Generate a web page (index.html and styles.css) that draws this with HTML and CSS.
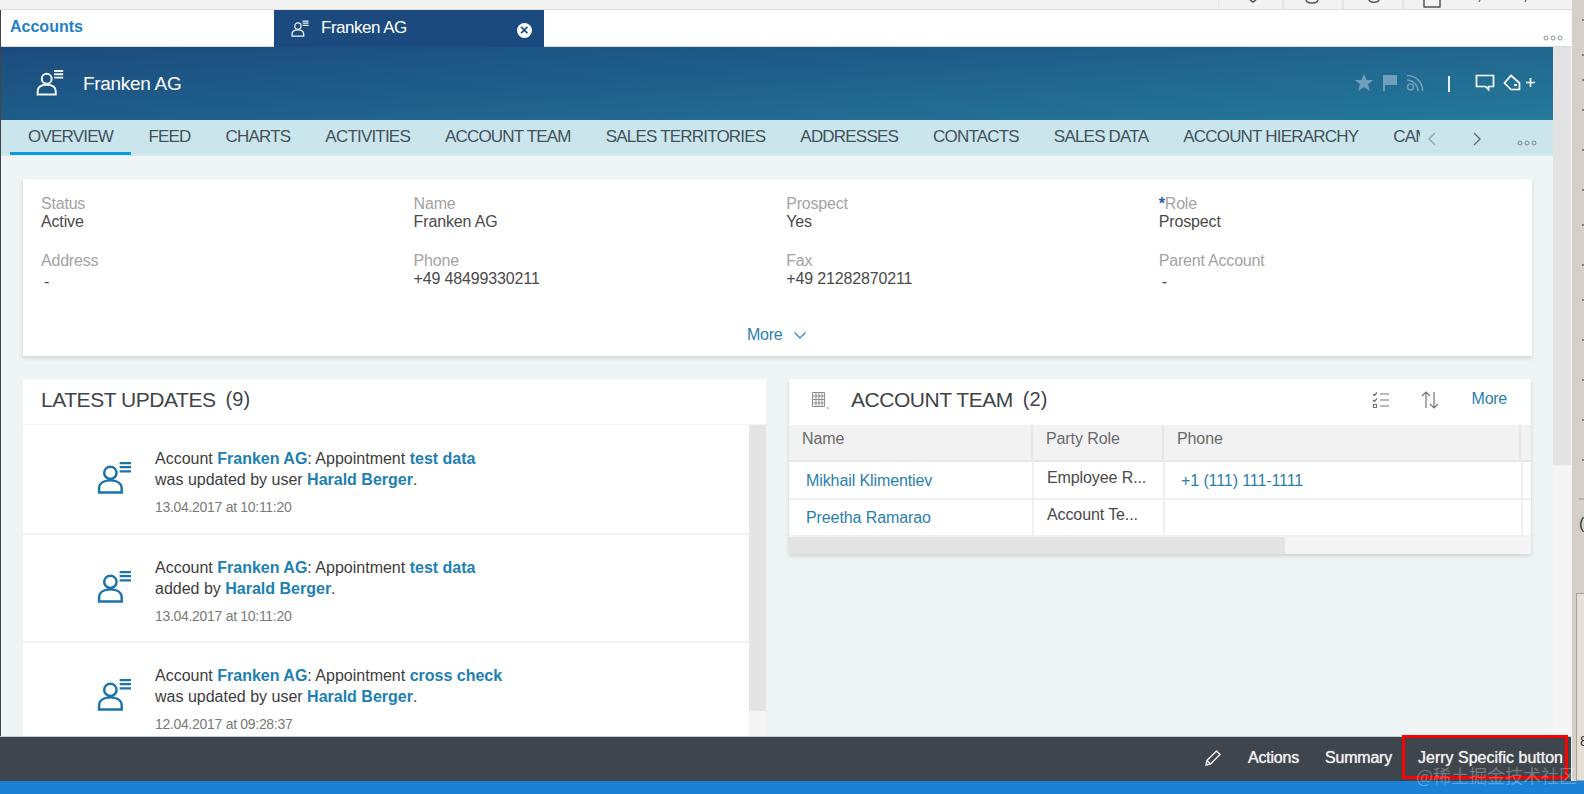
FILE: index.html
```html
<!DOCTYPE html>
<html lang="en">
<head>
<meta charset="utf-8">
<title>Franken AG</title>
<link rel="stylesheet" href="styles.css">
</head>
<body>
<svg class="defs" width="0" height="0">
  <symbol id="person" viewBox="0 0 34 32">
    <circle cx="13" cy="11.5" r="6" fill="none" stroke="currentColor" stroke-width="2.4"/>
    <path d="M2 30.5v-3.5c0-5 4-8.2 11-8.2s11 3.200 11 8.200v3.500z" fill="none" stroke="currentColor" stroke-width="2.4"/>
    <path d="M22 2h11M22 6h11M22 10h11" stroke="currentColor" stroke-width="2.200"/>
  </symbol>
  <symbol id="dots" viewBox="0 0 20 6">
    <circle cx="3" cy="3" r="2" fill="none" stroke="currentColor"/>
    <circle cx="10" cy="3" r="2" fill="none" stroke="currentColor"/>
    <circle cx="17" cy="3" r="2" fill="none" stroke="currentColor"/>
  </symbol>
</svg>
<div class="app">
  <div class="window">
    <div class="topstrip">
      <svg width="376" height="10" viewBox="0 0 376 10" fill="none" stroke="#777" stroke-width="1.500">
        <path d="M0 0v10M65 0v10M125 0v10M185 0v10" stroke="#d8d8d8" stroke-width="1"/>
        <path d="M32 0l3 2 3-2M88 0c1 4 11 4 12 0M151 0c1 3 9 3 10 0M206 0v7h16V0" stroke="#555"/>
        <path d="M262 0l-1 2M308 0l-1 2"/>
      </svg>
    </div>
    <div class="tabbar">
      <div class="tab-home">Accounts</div>
      <div class="tab-active">
        <svg class="tab-icon"><use href="#person"/></svg>
        <span class="tab-title">Franken AG</span>
        <span class="tab-close">×</span>
      </div>
      <svg class="tab-dots"><use href="#dots"/></svg>
    </div>
    <div class="body">
      <div class="main">
        <header class="objhead">
          <svg class="obj-icon"><use href="#person"/></svg>
          <h1 class="obj-title">Franken AG</h1>
          <div class="obj-actions">
            <svg class="act dim" width="20" height="20" viewBox="0 0 20 20"><path d="M10 1l2.600 6h6.400l-5 4.200 1.900 6.800L10 14.200 4.100 18 6 11.200 1 7h6.400z" fill="currentColor"/></svg>
            <svg class="act dim" width="16" height="18" viewBox="0 0 16 18"><path d="M1 1h14v10H3v6H1z" fill="currentColor"/></svg>
            <svg class="act dim" width="18" height="18" viewBox="0 0 18 18" fill="none" stroke="currentColor" stroke-width="1.500"><circle cx="4.500" cy="13" r="3"/><path d="M1 6c6 0 11 5 11 11M1 1.500c9 0 15.500 6.500 15.500 15.500"/></svg>
            <span class="act-sep"></span>
            <svg class="act chat" width="20" height="18" viewBox="0 0 20 18" fill="none" stroke="currentColor" stroke-width="1.700"><path d="M1.500 1.500h17v11h-5v3l-3-3h-9z"/></svg>
            <svg class="act tag" width="18" height="18" viewBox="0 0 18 18" fill="none" stroke="currentColor" stroke-width="1.700"><path d="M8 1.500l8.500 7.500v6.500H8L1.500 9z"/><path d="M11 11h3"/></svg>
            <svg class="act" width="9" height="9" viewBox="0 0 10 10" stroke="currentColor" stroke-width="1.800"><path d="M5 0v10M0 5h10"/></svg>
          </div>
        </header>
        <nav class="navbar">
          <div class="navlist">
            <a class="navitem is-active">OVERVIEW</a>
            <a class="navitem">FEED</a>
            <a class="navitem">CHARTS</a>
            <a class="navitem">ACTIVITIES</a>
            <a class="navitem">ACCOUNT TEAM</a>
            <a class="navitem">SALES TERRITORIES</a>
            <a class="navitem">ADDRESSES</a>
            <a class="navitem">CONTACTS</a>
            <a class="navitem">SALES DATA</a>
            <a class="navitem">ACCOUNT HIERARCHY</a>
            <a class="navitem">CAMPAIGNS</a>
          </div>
          <div class="navctl">
            <svg width="8" height="14" viewBox="0 0 8 14" fill="none" stroke="#8fa3ab" stroke-width="1.300"><path d="M7 1L1 7l6 6"/></svg>
            <svg width="8" height="14" viewBox="0 0 8 14" fill="none" stroke="#5a6b72" stroke-width="1.300"><path d="M1 1l6 6-6 6"/></svg>
            <svg class="nav-dots"><use href="#dots"/></svg>
          </div>
        </nav>
        <div class="content">
          <section class="card overview">
            <div class="fields">
              <div class="field"><div class="label">Status</div><div class="value">Active</div></div>
              <div class="field"><div class="label">Name</div><div class="value">Franken AG</div></div>
              <div class="field"><div class="label">Prospect</div><div class="value">Yes</div></div>
              <div class="field"><div class="label"><b class="req">*</b>Role</div><div class="value">Prospect</div></div>
              <div class="field"><div class="label">Address</div><div class="value dash">-</div></div>
              <div class="field"><div class="label">Phone</div><div class="value">+49 48499330211</div></div>
              <div class="field"><div class="label">Fax</div><div class="value">+49 21282870211</div></div>
              <div class="field"><div class="label">Parent Account</div><div class="value dash">-</div></div>
            </div>
            <div class="more-row">
              <a class="link">More</a>
              <svg width="12" height="7" viewBox="0 0 12 7" fill="none" stroke="#2a7fae" stroke-width="1.100"><path d="M.5.500L6 6l5.500-5.500"/></svg>
            </div>
          </section>
          <div class="columns">
            <section class="updates">
              <div class="panel-head"><h2 class="panel-title">LATEST UPDATES</h2><span class="panel-count">(9)</span></div>
              <div class="feed">
                <div class="feedlist">
                  <article class="feeditem first">
                    <svg class="feedicon"><use href="#person"/></svg>
                    <div>
                      <p class="line">Account <a class="flink">Franken AG</a>: Appointment <a class="flink">test data</a></p>
                      <p class="line">was updated by user <a class="flink">Harald Berger</a>.</p>
                      <p class="date">13.04.2017 at 10:11:20</p>
                    </div>
                  </article>
                  <article class="feeditem">
                    <svg class="feedicon"><use href="#person"/></svg>
                    <div>
                      <p class="line">Account <a class="flink">Franken AG</a>: Appointment <a class="flink">test data</a></p>
                      <p class="line">added by <a class="flink">Harald Berger</a>.</p>
                      <p class="date">13.04.2017 at 10:11:20</p>
                    </div>
                  </article>
                  <article class="feeditem">
                    <svg class="feedicon"><use href="#person"/></svg>
                    <div>
                      <p class="line">Account <a class="flink">Franken AG</a>: Appointment <a class="flink">cross check</a></p>
                      <p class="line">was updated by user <a class="flink">Harald Berger</a>.</p>
                      <p class="date">12.04.2017 at 09:28:37</p>
                    </div>
                  </article>
                </div>
                <div class="feedscroll"><div class="feedthumb"></div></div>
              </div>
            </section>
            <section class="card team">
              <div class="panel-head team-head">
                <svg class="grid-icon" width="20" height="18" viewBox="0 0 20 18" fill="none" stroke="#8a8f92"><path d="M3.500 1.500h12v14h-12zM3.500 5h12M3.500 8.500h12M3.500 12h12M7 1.500v14M10 1.500v14M13 1.500v14"/><path d="M18 17h2"/></svg>
                <h2 class="panel-title">ACCOUNT TEAM</h2><span class="panel-count">(2)</span>
                <div class="team-tools">
                  <svg width="18" height="18" viewBox="0 0 18 18" fill="none" stroke="#6f7477" stroke-width="1.200"><path d="M1 3l1.500 1.500L5 1.500M1 9l1.500 1.500L5 7.500M8 3h9M8 9h9M8 15h9M1.500 13.500h3v3h-3z"/></svg>
                  <svg width="20" height="20" viewBox="0 0 20 20" fill="none" stroke="#6f7477" stroke-width="1.200"><path d="M6 18V2M2 6l4-4 4 4M14 2v16M10 14l4 4 4-4"/></svg>
                  <a class="link team-more">More</a>
                </div>
              </div>
              <div class="thead">
                <div class="th">Name</div><div class="th">Party Role</div><div class="th">Phone</div><div class="th"></div>
              </div>
              <div class="tr">
                <div class="td"><a class="link">Mikhail Klimentiev</a></div>
                <div class="td role">Employee R...</div>
                <div class="td"><a class="link">+1 (111) 111-1111</a></div>
                <div class="td"></div>
              </div>
              <div class="tr">
                <div class="td"><a class="link">Preetha Ramarao</a></div>
                <div class="td role">Account Te...</div>
                <div class="td"></div>
                <div class="td"></div>
              </div>
              <div class="hscroll"><div class="hthumb"></div></div>
            </section>
          </div>
        </div>
      </div>
      <div class="pagescroll"><div class="pagethumb"></div></div>
    </div>
    <footer class="footer">
      <svg class="edit" width="18" height="18" viewBox="0 0 18 18" fill="none" stroke="#e8e8e8" stroke-width="1.500"><path d="M2 16l1-4.500L12.500 2l3.500 3.500L6.500 15z"/><path d="M3 11.500L6.500 15"/></svg>
      <button class="fbtn">Actions</button>
      <button class="fbtn">Summary</button>
      <button class="fbtn marked">Jerry Specific button</button>
    </footer>
  </div>
  <aside class="rail">
    <svg class="rail-ticks" width="13" height="500" viewBox="0 0 13 500" stroke="#333">
      <path d="M11 20h2M11 55h2M11 80h2M11 110h2M11 150h2M11 190h2M11 225h2M11 265h2M11 300h2M11 340h2M11 380h2M11 420h2M11 460h2"/>
      <path d="M8 499h5" stroke="#999"/>
    </svg>
    <div class="rail-bracket">(</div>
    <div class="rail-box"><span class="rail-num">8</span></div>
  </aside>
</div>
<div class="statusbar"><span class="watermark">@稀土掘金技术社区</span></div>
</body>
</html>
```
FILE: styles.css
```css
* { box-sizing: border-box; }
html, body { margin: 0; padding: 0; }
body {
  width: 1584px;
  height: 794px;
  overflow: hidden;
  font-family: "Liberation Sans", Arial, sans-serif;
  font-size: 16px;
  color: #333;
  background: #fff;
  position: relative;
}
.defs { position: absolute; }
p, h1, h2 { margin: 0; font-weight: 400; }
.app { display: flex; height: 781px; }
.window { width: 1571px; display: flex; flex-direction: column; border-left: 1px solid #444; }

.topstrip { height: 10px; background: #f2f2f2; border-bottom: 1px solid #dcdcdc; display: flex; justify-content: flex-end; overflow: hidden; margin-left: -1px; }
.topstrip svg { display: block; flex: none; margin-right: -23px; }

.tabbar { height: 37px; background: #fff; border-bottom: 1px solid #d9d9d9; display: flex; align-items: stretch; position: relative; }
.tab-home { width: 273px; padding: 6px 0 0 9px; color: #1f80c6; font-weight: 700; font-size: 16px; line-height: 22px; }
.tab-active { width: 270px; background: #1b4b7e; color: #fff; display: flex; align-items: flex-start; padding: 8px 0 0 17px; margin-bottom: -1px; }
.tab-icon { width: 18px; height: 17px; margin-top: 2px; color: #eef3f7; }
.tab-title { margin-left: 12px; font-size: 17px; letter-spacing: -.5px; line-height: 20px; }
.tab-close { width: 15px; height: 15px; border-radius: 50%; background: #fff; color: #1b4b7e; font-weight: 700; font-size: 15px; line-height: 14px; text-align: center; margin: 5px 0 0 110px; }
.tab-dots { width: 20px; height: 6px; color: #8a949a; margin: 25px 8px 0 auto; }

.body { flex: 1; display: flex; min-height: 0; }
.main { width: 1552px; display: flex; flex-direction: column; background: #eff5f5; min-height: 0; overflow: hidden; }
.pagescroll { width: 18px; background: #f5f5f5; }
.pagethumb { height: 418px; background: #e3e3e3; }

.objhead { height: 73px; flex: none; background: linear-gradient(176deg, #1b4b7e 0%, #1f5f8a 45%, #257a9b 100%); color: #fff; display: flex; align-items: center; padding-left: 35px; }
.obj-icon { width: 28px; height: 27px; color: #f2f6f8; margin-top: -2px; }
.obj-title { font-size: 19px; margin-left: 19px; letter-spacing: -.3px; line-height: 22px; }
.obj-actions { margin-left: auto; display: flex; align-items: center; padding-right: 18px; margin-top: -2px; }
.act { display: block; color: #fff; margin-left: 8px; }
.act:last-child { margin-left: 5px; }
.act.tag { margin-left: 8px; }
.act.chat { margin-left: 0; }
.act-sep { width: 2px; height: 16px; background: #e8eef2; margin: 2px 25px 0 24px; }
.act.dim { color: #6f9fba; }

.navbar { height: 36px; flex: none; background: #cbe5ed; display: flex; border-bottom: 1px solid #dfeaec; }
.navlist { width: 1419px; display: flex; overflow: hidden; padding-left: 9px; }
.navitem { flex: none; padding: 7px 17.5px 0; height: 35px; font-size: 17px; line-height: 20px; color: #43515a; letter-spacing: -.8px; }
.navitem.is-active { border-bottom: 3px solid #0a99dc; padding-left: 18px; padding-right: 18px; }
.navctl { flex: 1; display: flex; align-items: flex-start; padding-top: 12px; }
.navctl svg:nth-child(1) { margin-left: 8px; }
.navctl svg:nth-child(2) { margin-left: 37px; }
.nav-dots { width: 20px; height: 6px; color: #75858c; margin: 8px 0 0 36px; }

.content { flex: 1; min-height: 0; padding: 23px 21px 0 22px; overflow: hidden; }
.card { background: #fff; box-shadow: 0 2px 4px rgba(0,0,0,.14); }
.overview { height: 177px; padding: 16px 18px 0; }
.fields { display: grid; grid-template-columns: repeat(4, 372.600px); grid-auto-rows: 57px; }
.label { color: #a3a3a3; font-size: 16px; line-height: 17px; letter-spacing: -.2px; }
.value { color: #4a4a4a; font-size: 16px; line-height: 19px; letter-spacing: -.15px; }
.value.dash { padding: 3px 0 0 3px; }
.req { color: #1b5ca8; font-weight: 700; }
.more-row { display: flex; align-items: center; gap: 12px; padding: 17px 0 0 706px; }
.link { color: #2a7fae; font-size: 16px; letter-spacing: -.25px; }

.columns { display: flex; gap: 23px; margin-top: 23px; align-items: flex-start; }
.updates { width: 743px; flex: none; }
.panel-head { height: 45px; background: #fff; display: flex; align-items: center; padding: 0 0 4px 18px; }
.panel-title { font-size: 21px; letter-spacing: -.45px; color: #3f4448; line-height: 24px; }
.panel-count { font-size: 20px; margin-left: 10px; color: #3f4448; }
.feed { display: flex; margin-top: 1px; height: 312px; overflow: hidden; }
.feedlist { width: 726px; }
.feeditem { background: #fff; height: 106px; margin-bottom: 2px; display: flex; padding: 22px 0 0 74px; }
.feeditem.first { height: 108px; padding-top: 23px; }
.feedicon { width: 35px; height: 33px; color: #1a73a8; margin: 13px 23px 0 0; flex: none; }
.line { font-size: 16px; line-height: 21px; color: #3d3d3d; }
.flink { color: #2080b2; font-weight: 700; }
.date { font-size: 14px; line-height: 18px; color: #7a7a7a; margin-top: 8px; letter-spacing: -.3px; }
.feedscroll { width: 17px; background: #f5f5f5; }
.feedthumb { height: 286px; background: #e4e4e4; }

.team { width: 742px; flex: none; height: 175px; }
.team-head { padding-left: 20px; }
.grid-icon { margin-right: 22px; flex: none; }
.team-tools { margin-left: auto; display: flex; align-items: center; padding-right: 24px; }
.team-tools svg:nth-child(2) { margin-left: 30px; }
.team-more { margin-left: 32px; margin-top: -1px; }
.thead { display: grid; grid-template-columns: 244px 131px 357px 10px; height: 37px; margin-top: 1px; background: #f2f2f2; border-bottom: 2px solid #e8e8e8; }
.th { padding: 5px 0 0 13px; border-right: 2px solid #e6e6e6; line-height: 18px; color: #6a6a6a; letter-spacing: -.1px; }
.th:last-child { border-right: 0; }
.tr { display: grid; grid-template-columns: 245px 131px 358px 8px; height: 38px; border-bottom: 2px solid #f0f0f0; background: #fff; }
.tr:nth-of-type(4) { height: 37px; }
.td { padding: 9px 0 0 17px; border-right: 2px solid #f0f0f0; line-height: 19px; white-space: nowrap; }
.td:nth-child(3) { padding-left: 16px; }
.td:last-child { border-right: 0; }
.td .link { letter-spacing: -.1px; }
.td.role { padding: 6px 0 0 13px; color: #4a4a4a; font-size: 16px; letter-spacing: -.1px; }
.tr:nth-of-type(4) .td { padding-top: 8px; }
.tr:nth-of-type(4) .td.role { padding-top: 5px; }
.hscroll { height: 17px; background: #f5f5f5; }
.hthumb { width: 496px; height: 100%; background: #e4e4e4; }

.footer { height: 45px; flex: none; background: #3f454c; border-top: 1px solid #c6ccce; display: flex; align-items: center; justify-content: flex-end; padding: 0 8px 3px 0; margin-left: -1px; }
.fbtn { font: inherit; font-size: 16px; color: #eee; background: none; border: 0; padding: 0; margin: 0 0 0 26px; letter-spacing: -.2px; text-shadow: 0 0 1px #eee; }
.marked { position: relative; margin-left: 26px; letter-spacing: 0; }
.marked::after { content: ""; position: absolute; left: -16px; right: -5px; top: -14px; bottom: -12px; border: 3px solid #f00; }

.rail { width: 13px; background: #d4d0c8; border-left: 1px solid #f4f2ee; display: flex; flex-direction: column; position: relative; }
.rail-ticks { flex: none; display: block; margin-left: -1px; }
.rail-bracket { height: 24px; margin: 14px 0 0 7px; font-size: 16px; line-height: 20px; color: #333; }
.rail-box { flex: 1; margin: 55px 0 0 4px; background: #e4e0d8; border: 1px solid #a5a29b; border-right: 0; padding: 138px 0 0 3px; }
.rail-num { font-size: 14px; line-height: 16px; color: #333; }

.statusbar { height: 13px; background: #1a82d6; position: relative; }
.watermark { position: absolute; right: 7px; top: -18px; font-family: "Noto Sans CJK SC", sans-serif; font-size: 18px; line-height: 24px; color: rgba(255,255,255,.28); white-space: nowrap; }
```
